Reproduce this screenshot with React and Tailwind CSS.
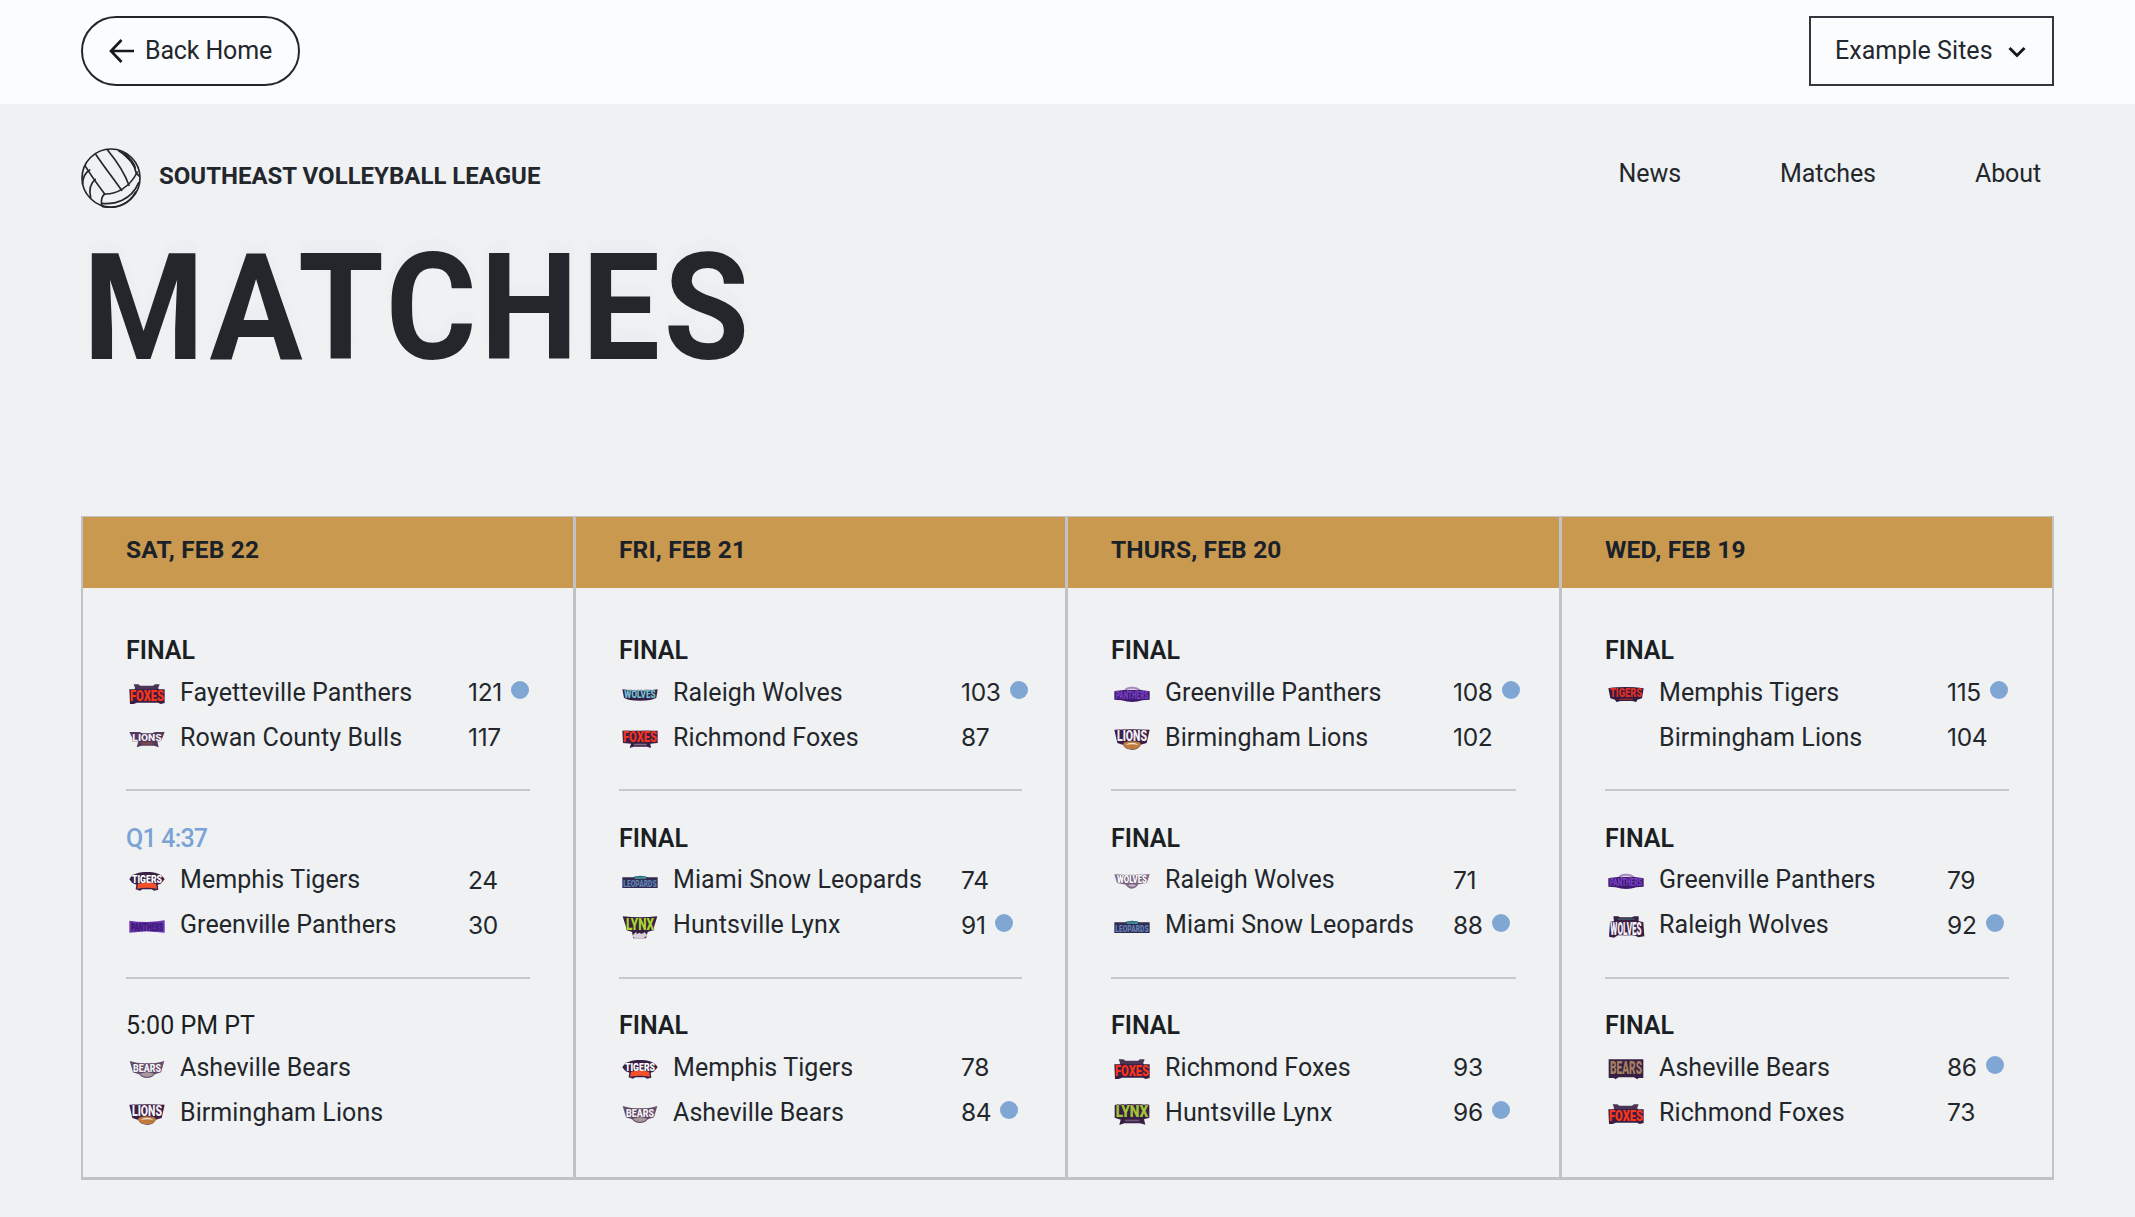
import { twMerge } from "tailwind-merge";

const PLUM = "#3a1f45";

// Wordmark badges, all drawn on a 108 x 72 canvas.
// `shapes` sit behind the word, `front` lies over its lower edge.
const LOGOS = {
    foxes: {
        shapes: [
            ["M14 10h14l6 4h38l6-4h14l-4 10 2 10H16l2-10z", "#4b3555"],
            ["M1 25h106v41l-12 3-8-4H24l-10 4H3z", PLUM],
        ],
        word: "FOXES", fill: "#ff3518", size: 45, y: 59, x: 3, w: 102, stroke: 1,
    },
    foxesArch: {
        shapes: [["M1 14h106v37l-22 2 2 13-12-4H35l-12 4 4-13-24-2z", PLUM]],
        word: "FOXES", fill: "#f0341f", size: 44, y: 47, x: 3, w: 102, stroke: 1,
        front: [["M38 53h34l4 5H34z", "#80708a"]],
    },
    lionsWing: {
        shapes: [["M1 18h30l10 4h28l10-4h28l-8 20-14 8 4 18-14-5H38l-15 5 5-18-16-6z", "#553c5f"]],
        word: "LIONS", fill: "#f4eff5", size: 29, y: 44, x: 10, w: 88, stroke: 2,
        front: [["M38 49h32v7H38z", "#7c4a4c"]],
    },
    tigers: {
        shapes: [["M1 34C10 16 32 12 54 12s44 4 53 22l-12 13-9 3 2 15-13 3-7-4H40l-7 4-13-4 2-14-12-5z", PLUM]],
        word: "TIGERS", fill: "#ffffff", size: 35, y: 44, x: 9, w: 90, stroke: 1,
        front: [["M27 47q27-6 54 0l3 15q-30-6-60 0z", "#f4512b"]],
    },
    tigersRed: {
        shapes: [["M1 22q53-8 106 0l-5 30-14 4-3 7-12-3H38l-13 3-4-7-14-4z", "#321b40"]],
        word: "TIGERS", fill: "#e02f22", size: 36, y: 48, x: 6, w: 96, stroke: 1,
        front: [["M34 53h40v4H34z", "#9a2932"]],
    },
    panthers: {
        shapes: [["M1 23l24 3 30 1 30-2 22-3v37l-53-4-53 4z", "#6a35b0"]],
        word: "PANTHERS", fill: "#3f1a78", size: 34, y: 53, x: 6, w: 96, stroke: 1, edge: "#4a2090",
    },
    panthersClub: {
        shapes: [
            ["M28 33c2-13 16-16 26-16s26 3 29 16z", "#a88cc0"],
            ["M1 31l28-4h50l28 4v25l-22 2q-30 10-62 0L1 56z", "#3f1a70"],
        ],
        word: "PANTHERS", fill: "#7a3fc8", size: 32, y: 55, x: 5, w: 98, stroke: 1, edge: "#331752",
        front: [["M36 29q18-12 36 0-18-5-36 0z", "#f2eaf7"]],
    },
    bears: {
        shapes: [["M2 15q20 5 32 7h40q14-2 32-7l-10 34-18 6q-8 11-24 11t-24-11l-18-6z", "#65506d"]],
        word: "BEARS", fill: "#f6f1f5", size: 34, y: 48, x: 12, w: 84, stroke: 1,
        front: [["M32 54q22-10 44 0-10 9-22 9t-22-9z", "#aa989d"]],
    },
    bearsTan: {
        shapes: [["M2 10h104v56H92l-4 4-10-6H32l-10 6-4-4H2z", PLUM]],
        word: "BEARS", fill: "#a3805f", size: 54, y: 53, x: 6, w: 96, stroke: 1,
    },
    lions: {
        shapes: [["M1 11q52-3 106 0l-9 40-18 5q-6 15-26 15T28 57l-18-6z", PLUM]],
        word: "LIONS", fill: "#f3eef4", size: 46, y: 46, x: 9, w: 90, stroke: 1,
        front: [
            ["M27 55q2-9 27-9t27 9q-2 15-27 15T27 55z", "#bd7b3e"],
            ["M34 56q20-12 40 0-20-3-40 0z", "#f3e4d8"],
        ],
    },
    wolvesTeal: {
        shapes: [["M1 25q53 9 106 0l-4 25q-12 9-49 9T6 50z", PLUM]],
        word: "WOLVES", fill: "#6cc6d2", size: 31, y: 51, x: 7, w: 94, stroke: 1,
    },
    wolves: {
        shapes: [["M1 19l33 3h40l33-4-8 26-26 5q-8 13-19 13T35 50L9 44z", "#806b89"]],
        word: "WOLVES", fill: "#ffffff", size: 35, y: 46, x: 9, w: 90, stroke: 1,
        front: [["M42 52q12-7 24 0-10 8-24 0z", "#c5b9c7"]],
    },
    wolvesTall: {
        shapes: [["M16 10h14l6 3h36l6-3h14v14l14 4 3 42-18 3-12-6H30l-12 7-15-3 3-43 12-4z", PLUM]],
        word: "WOLVES", fill: "#f5f1f6", size: 55, y: 67, x: 7, w: 94, stroke: 1,
        front: [["M29 16h51v5H29z", "#3e5360"]],
    },
    leopards: {
        shapes: [["M1 28h32q21-10 44 0h30v32H1z", "#302c54"]],
        word: "LEOPARDS", fill: "#6086b8", size: 29, y: 57, x: 4, w: 100, stroke: 1,
        front: [["M38 25h34v8H38z", "#3b8a91"]],
    },
    lynx: {
        shapes: [["M2 10q52 6 104 0L93 52l-16 5-5 19H34l-4-19-15-5z", PLUM]],
        word: "LYNX", fill: "#a9d62a", size: 51, y: 52, x: 12, w: 84, stroke: 1,
        front: [["M30 69l12-12 3 6 8-4 5 4 10-5 8 9-10 8H38z", "#d9cfdc"]],
    },
    lynxFlat: {
        shapes: [["M2 12q52-5 104 0v38L90 55l4 16-16-4H31l-15 5 4-16L2 50z", PLUM]],
        word: "LYNX", fill: "#a0c636", size: 50, y: 49, x: 5, w: 98, stroke: 2,
        front: [["M33 56h43v5H33z", "#6b5575"]],
    },
};

const DAYS = [
    {
        date: "SAT, FEB 22",
        matches: [
            {
                status: "FINAL",
                teams: [
                    { name: "Fayetteville Panthers", logo: "foxes", score: 121, winner: true },
                    { name: "Rowan County Bulls", logo: "lionsWing", score: 117 },
                ],
            },
            {
                status: "Q1 4:37",
                live: true,
                teams: [
                    { name: "Memphis Tigers", logo: "tigers", score: 24 },
                    { name: "Greenville Panthers", logo: "panthers", score: 30 },
                ],
            },
            {
                status: "5:00 PM PT",
                upcoming: true,
                teams: [
                    { name: "Asheville Bears", logo: "bears" },
                    { name: "Birmingham Lions", logo: "lions" },
                ],
            },
        ],
    },
    {
        date: "FRI, FEB 21",
        matches: [
            {
                status: "FINAL",
                teams: [
                    { name: "Raleigh Wolves", logo: "wolvesTeal", score: 103, winner: true },
                    { name: "Richmond Foxes", logo: "foxesArch", score: 87 },
                ],
            },
            {
                status: "FINAL",
                teams: [
                    { name: "Miami Snow Leopards", logo: "leopards", score: 74 },
                    { name: "Huntsville Lynx", logo: "lynx", score: 91, winner: true },
                ],
            },
            {
                status: "FINAL",
                teams: [
                    { name: "Memphis Tigers", logo: "tigers", score: 78 },
                    { name: "Asheville Bears", logo: "bears", score: 84, winner: true },
                ],
            },
        ],
    },
    {
        date: "THURS, FEB 20",
        matches: [
            {
                status: "FINAL",
                teams: [
                    { name: "Greenville Panthers", logo: "panthersClub", score: 108, winner: true },
                    { name: "Birmingham Lions", logo: "lions", score: 102 },
                ],
            },
            {
                status: "FINAL",
                teams: [
                    { name: "Raleigh Wolves", logo: "wolves", score: 71 },
                    { name: "Miami Snow Leopards", logo: "leopards", score: 88, winner: true },
                ],
            },
            {
                status: "FINAL",
                teams: [
                    { name: "Richmond Foxes", logo: "foxes", score: 93 },
                    { name: "Huntsville Lynx", logo: "lynxFlat", score: 96, winner: true },
                ],
            },
        ],
    },
    {
        date: "WED, FEB 19",
        matches: [
            {
                status: "FINAL",
                teams: [
                    { name: "Memphis Tigers", logo: "tigersRed", score: 115, winner: true },
                    { name: "Birmingham Lions", score: 104 },
                ],
            },
            {
                status: "FINAL",
                teams: [
                    { name: "Greenville Panthers", logo: "panthersClub", score: 79 },
                    { name: "Raleigh Wolves", logo: "wolvesTall", score: 92, winner: true },
                ],
            },
            {
                status: "FINAL",
                teams: [
                    { name: "Asheville Bears", logo: "bearsTan", score: 86, winner: true },
                    { name: "Richmond Foxes", logo: "foxes", score: 73 },
                ],
            },
        ],
    },
];

function TeamLogo({ name }) {
    const logo = LOGOS[name];
    if (!logo) {
        return <span className="w-9 shrink-0" />;
    }
    // font size that fills the width, then stretched to the wanted height
    const fontSize = logo.w / (logo.word.length * 0.64);
    return (
        <svg viewBox="0 0 108 72" className="h-6 w-9 shrink-0 overflow-visible">
            {logo.shapes.map(([d, fill]) => (
                <path key={d} d={d} fill={fill} />
            ))}
            <text
                transform={`translate(${logo.x} ${logo.y}) scale(1 ${logo.size / fontSize})`}
                fontSize={fontSize}
                textLength={logo.w}
                lengthAdjust="spacingAndGlyphs"
                fill={logo.fill}
                stroke={logo.edge || PLUM}
                strokeWidth={logo.stroke}
                className="font-['Roboto',sans-serif] font-black [paint-order:stroke]"
            >
                {logo.word}
            </text>
            {logo.front?.map(([d, fill]) => (
                <path key={d} d={d} fill={fill} />
            ))}
        </svg>
    );
}

function TeamRow({ team }) {
    return (
        <div className="flex h-[45px] items-center pl-[3px]">
            <TeamLogo name={team.logo} />
            <span className="ml-[15px] w-[288px] shrink-0 whitespace-nowrap tracking-[0.08px]">
                {team.name}
            </span>
            <span className="font-['Inter',sans-serif] text-[24.5px] tracking-[-0.3px]">
                {team.score}
            </span>
            {team.winner && (
                <span className="mb-[5px] ml-[9px] size-[18px] shrink-0 rounded-full bg-[#80a6d4]" />
            )}
        </div>
    );
}

function Match({ match }) {
    return (
        <div className="border-b-2 border-[#c6c9cc] pt-[28.5px] pb-[29px] first:pt-0 last:border-b-0 last:pb-0">
            <p
                className={twMerge(
                    "h-[38px] leading-[38px] font-semibold text-[#1b1f24]",
                    match.live && "font-medium tracking-[-0.8px] text-[#7ba3d6]",
                    match.upcoming && "font-normal"
                )}
            >
                {match.status}
            </p>
            {match.teams.map((team) => (
                <TeamRow key={team.name} team={team} />
            ))}
        </div>
    );
}

function Day({ day }) {
    return (
        <div className="border-l-[3px] border-[#bfc3c8] first:border-l-0">
            <h2 className="h-[71px] bg-[#c8994f] px-[43px] pt-[15px] text-[24.5px] leading-[36px] font-bold tracking-[0.15px] text-[#1b2129]">
                {day.date}
            </h2>
            <div className="px-[43px] pt-[44px] pb-[42px]">
                {day.matches.map((match, i) => (
                    <Match key={i} match={match} />
                ))}
            </div>
        </div>
    );
}

function Volleyball() {
    return (
        <svg
            viewBox="0 0 180 180"
            className="size-[60px] shrink-0"
            fill="none"
            stroke="#23272c"
            strokeWidth="5"
            strokeLinecap="round"
        >
            <circle cx="90" cy="90" r="87" />
            <path d="M45 20C64 48 94 88 122 127" />
            <path d="M79 5C102 33 130 72 144 112" />
            <path d="M12 53C29 81 50 110 71 138" />
            <path d="M71 138C105 139 145 120 169 72" />
            <path d="M71 138C60 146 60 158 62 172" />
            <path d="M62 166C100 171 151 157 173 104" />
            <path d="M64 175C98 185 142 173 164 132" />
            <path d="M113 8C143 24 162 52 166 76L174 84" />
            <path d="M124 14C138 30 156 42 159 54" />
            <path d="M132 17C151 33 158 45 163 59" />
            <path d="M26 66C10 76 5 90 5 108" />
            <path d="M43 94C28 106 24 126 29 148" />
        </svg>
    );
}

export default function App() {
    return (
        <div className="min-h-[1217px] w-[2135px] bg-[#eff1f3] font-['Roboto',sans-serif] text-[25px] text-[#23272c]">
            <header className="flex h-[104px] justify-between bg-[#fbfcfe] px-[81px] pt-4">
                <a className="flex h-[70px] w-[219px] items-center rounded-full border-2 border-[#23272c] pl-[26px]">
                    <svg
                        viewBox="0 0 25 24"
                        className="h-6 w-[25px]"
                        fill="none"
                        stroke="#16191d"
                        strokeWidth="2.7"
                    >
                        <path d="M25 12H2M12.5 1L2 12l10.5 11" />
                    </svg>
                    <span className="ml-[11px] tracking-[-0.15px]">Back Home</span>
                </a>
                <button className="flex h-[70px] w-[245px] items-center border-2 border-[#33363d] pl-6 tracking-[0.05px]">
                    Example Sites
                    <svg
                        viewBox="0 0 18 12"
                        className="mt-[1px] ml-[15px] h-3 w-[18px]"
                        fill="none"
                        stroke="#16191d"
                        strokeWidth="3"
                    >
                        <path d="M1.5 2L9 9.5 16.5 2" />
                    </svg>
                </button>
            </header>

            <main className="px-[81px] pt-11">
                <div className="flex h-[60px] justify-between">
                    <div className="flex">
                        <Volleyball />
                        <span className="ml-[18px] text-[24px] leading-[57px] font-bold">
                            SOUTHEAST VOLLEYBALL LEAGUE
                        </span>
                    </div>
                    <nav className="flex gap-[99px] pr-[13px] leading-[52px] tracking-[-0.1px]">
                        <a>News</a>
                        <a>Matches</a>
                        <a>About</a>
                    </nav>
                </div>

                <h1 className="mt-[27px] ml-[2px] origin-left scale-x-[0.937] text-[148px] leading-[148px] font-bold tracking-[4px] [text-shadow:0_-9px_10px_rgba(205,225,218,0.12)]">
                    MATCHES
                </h1>

                <section className="mt-[133px] grid w-[1973px] grid-cols-[490px_492px_494px_493px] border-x-2 border-t border-b-[3px] border-[#bfc3c8]">
                    {DAYS.map((day) => (
                        <Day key={day.date} day={day} />
                    ))}
                </section>
            </main>
        </div>
    );
}
